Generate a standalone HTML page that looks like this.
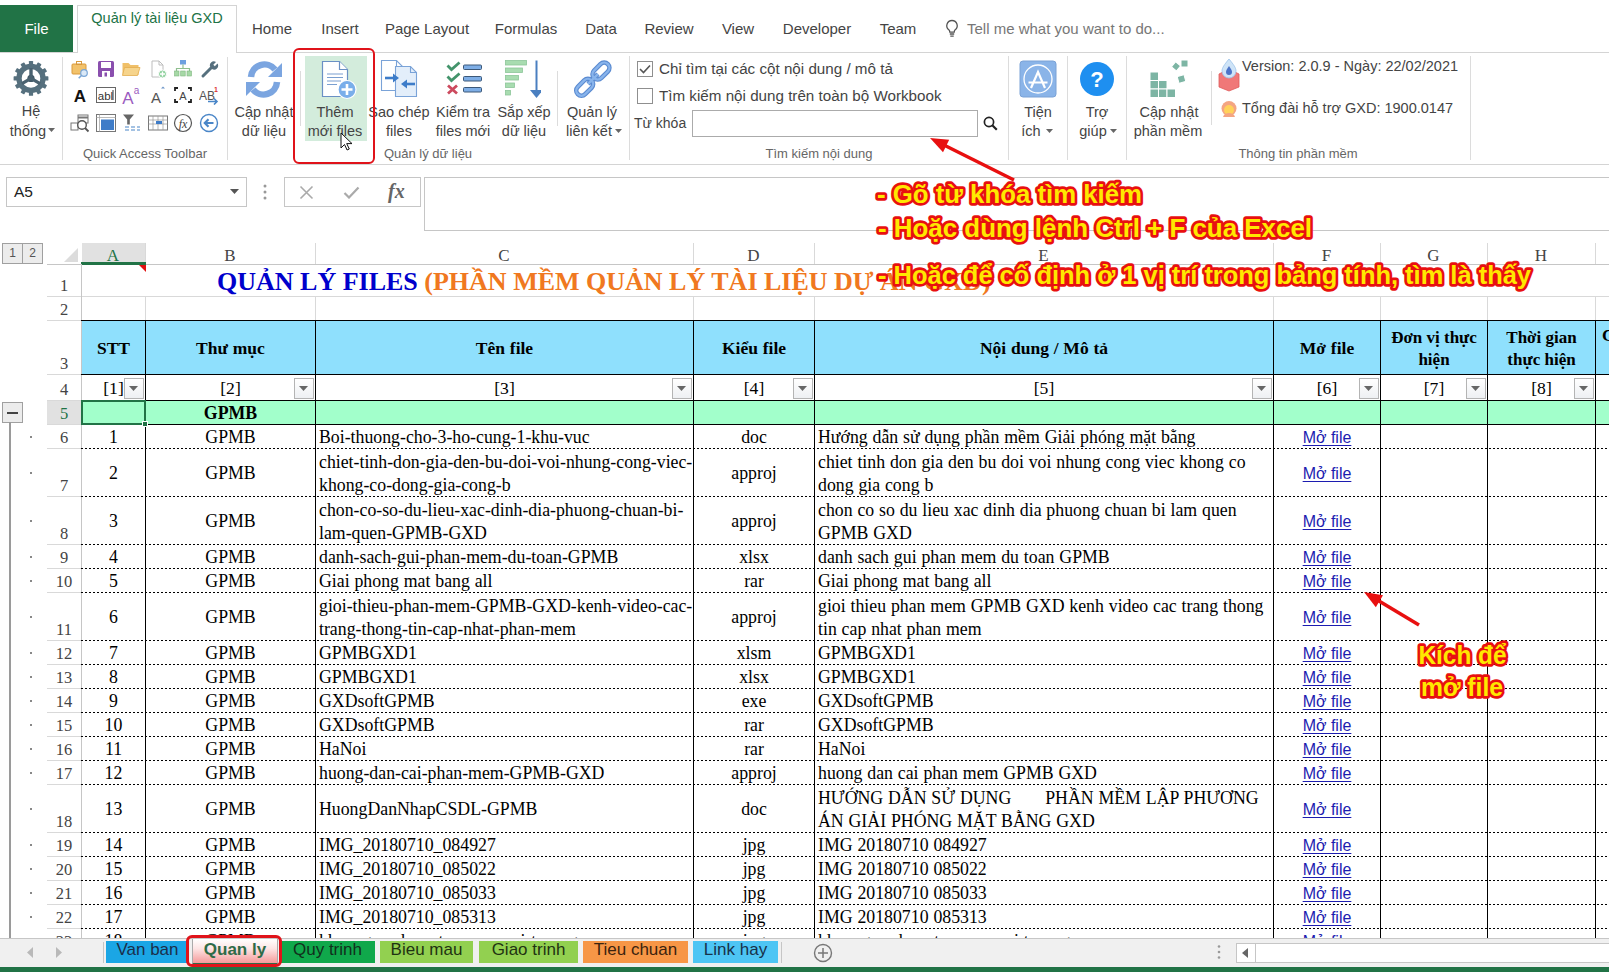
<!DOCTYPE html><html><head><meta charset="utf-8"><style>
*{margin:0;padding:0;box-sizing:border-box}
html,body{width:1609px;height:972px;overflow:hidden;background:#fff;position:relative;font-family:"Liberation Sans",sans-serif}
div,svg{position:absolute}
.t{white-space:pre;line-height:1}
.s{font-family:"Liberation Serif",serif}
.rb{color:#444;font-size:14.5px;text-align:center}
.gl{color:#666;font-size:13px;text-align:center}
.sep{background:#dcdcdc;width:1px}
</style></head><body>
<div style="left:0px;top:5px;width:73px;height:47px;background:#217346"></div>
<div class="t" style="left:0px;top:21px;width:73px;color:#fff;font-size:15px;text-align:center;">File</div>
<div style="left:77px;top:5px;width:160px;height:48px;border:1px solid #d4d4d4;border-bottom:none;background:#fff"></div>
<div class="t" style="left:77px;top:11px;width:160px;color:#217346;font-size:14.5px;text-align:center;">Quản lý tài liệu GXD</div>
<div style="left:0px;top:52px;width:78px;height:1px;background:#d4d4d4"></div>
<div style="left:236px;top:52px;width:1373px;height:1px;background:#d4d4d4"></div>
<div class="t" style="left:212px;top:21px;width:120px;color:#444;font-size:15px;text-align:center;">Home</div>
<div class="t" style="left:280px;top:21px;width:120px;color:#444;font-size:15px;text-align:center;">Insert</div>
<div class="t" style="left:367px;top:21px;width:120px;color:#444;font-size:15px;text-align:center;">Page Layout</div>
<div class="t" style="left:466px;top:21px;width:120px;color:#444;font-size:15px;text-align:center;">Formulas</div>
<div class="t" style="left:541px;top:21px;width:120px;color:#444;font-size:15px;text-align:center;">Data</div>
<div class="t" style="left:609px;top:21px;width:120px;color:#444;font-size:15px;text-align:center;">Review</div>
<div class="t" style="left:678px;top:21px;width:120px;color:#444;font-size:15px;text-align:center;">View</div>
<div class="t" style="left:757px;top:21px;width:120px;color:#444;font-size:15px;text-align:center;">Developer</div>
<div class="t" style="left:838px;top:21px;width:120px;color:#444;font-size:15px;text-align:center;">Team</div>
<svg style="left:945px;top:19px;" width="14" height="19" viewBox="0 0 14 19"><path d="M7 1.5a5.2 5.2 0 0 0-3.2 9.3c.8.7 1 1.5 1 2.4h4.4c0-.9.2-1.7 1-2.4A5.2 5.2 0 0 0 7 1.5z" fill="none" stroke="#555" stroke-width="1.3"/><path d="M4.8 15h4.4M5.3 17.2h3.4" stroke="#555" stroke-width="1.3"/></svg>
<div class="t" style="left:967px;top:21px;color:#777;font-size:15px;">Tell me what you want to do...</div>
<div style="left:0px;top:164px;width:1609px;height:1px;background:#d4d4d4"></div>
<svg style="left:12px;top:59px;" width="38" height="38" viewBox="0 0 38 38"><g transform="translate(19,19.4)">
<circle r="12" fill="none" stroke="#56707e" stroke-width="5.4"/>
<g fill="#56707e"><rect x="-2.1" y="-17.4" width="4.2" height="5" rx=".6" transform="rotate(0)"/><rect x="-2.1" y="-17.4" width="4.2" height="5" rx=".6" transform="rotate(30)"/><rect x="-2.1" y="-17.4" width="4.2" height="5" rx=".6" transform="rotate(60)"/><rect x="-2.1" y="-17.4" width="4.2" height="5" rx=".6" transform="rotate(90)"/><rect x="-2.1" y="-17.4" width="4.2" height="5" rx=".6" transform="rotate(120)"/><rect x="-2.1" y="-17.4" width="4.2" height="5" rx=".6" transform="rotate(150)"/><rect x="-2.1" y="-17.4" width="4.2" height="5" rx=".6" transform="rotate(180)"/><rect x="-2.1" y="-17.4" width="4.2" height="5" rx=".6" transform="rotate(210)"/><rect x="-2.1" y="-17.4" width="4.2" height="5" rx=".6" transform="rotate(240)"/><rect x="-2.1" y="-17.4" width="4.2" height="5" rx=".6" transform="rotate(270)"/><rect x="-2.1" y="-17.4" width="4.2" height="5" rx=".6" transform="rotate(300)"/><rect x="-2.1" y="-17.4" width="4.2" height="5" rx=".6" transform="rotate(330)"/></g>
<circle r="3.6" fill="#415866"/>
<path d="M0 0L0 -10.5M0 0L9.1 5.25M0 0L-9.1 5.25" stroke="#4a6270" stroke-width="3.4"/>
</g></svg>
<div class="t rb" style="left:0px;top:104px;width:62px;">Hệ</div>
<div class="t rb" style="left:0px;top:124px;width:56px;">thống</div>
<svg style="left:48px;top:128px;" width="8" height="5" viewBox="0 0 8 5"><path d="M0 0h7l-3.5 4z" fill="#666"/></svg>
<div style="background:#dcdcdc;left:62px;top:57px;width:1px;height:103px;"></div>
<div style="background:#dcdcdc;left:227px;top:57px;width:1px;height:103px;"></div>
<div class="t gl" style="left:62px;top:147px;width:166px;">Quick Access Toolbar</div>
<svg style="left:70px;top:59px;" width="20" height="20" viewBox="0 0 20 20"><rect x="2" y="5" width="14" height="10" rx="1" fill="#f2c26b" stroke="#d99a3c"/><rect x="6.5" y="2.5" width="5" height="3" fill="none" stroke="#d99a3c"/><circle cx="14" cy="14" r="3.3" fill="#dbe9f7" stroke="#7aa6d6" stroke-width="1.2"/><path d="M11.7 16.3l-3 3" stroke="#7aa6d6" stroke-width="1.6"/></svg>
<svg style="left:96px;top:59px;" width="20" height="20" viewBox="0 0 20 20"><rect x="2" y="2" width="16" height="16" rx="1.5" fill="#8a4fae"/><rect x="5" y="3" width="10" height="6" fill="#fff"/><rect x="6" y="12" width="8" height="6" fill="#fff"/><rect x="8.5" y="13.5" width="2.5" height="4" fill="#8a4fae"/></svg>
<svg style="left:121px;top:59px;" width="20" height="20" viewBox="0 0 20 20"><path d="M1.5 4h6l2 2h8v10h-16z" fill="#f0c069"/><path d="M3.5 8.5h15.5l-2.5 8h-15z" fill="#f6d48c" stroke="#e3ad4f" stroke-width=".8"/></svg>
<svg style="left:148px;top:59px;" width="20" height="20" viewBox="0 0 20 20"><path d="M4 2h7l4 4v12H4z" fill="#fff" stroke="#bdbdbd"/><path d="M11 2v4h4" fill="none" stroke="#bdbdbd"/><circle cx="14.5" cy="15" r="4" fill="#8fd19e" stroke="#fff"/><path d="M14.5 12.5v5M12 15h5" stroke="#fff" stroke-width="1.4"/></svg>
<svg style="left:173px;top:59px;" width="20" height="20" viewBox="0 0 20 20"><rect x="7" y="1" width="6" height="4.5" fill="#6ea0e0"/><path d="M10 5.5v4M3.5 12V9.5h13V12" fill="none" stroke="#8fbf8f" stroke-width="1.2"/><rect x="1.5" y="12" width="4.5" height="5" fill="#a6d8a6" stroke="#7fb87f" stroke-width=".6"/><rect x="7.7" y="12" width="4.5" height="5" fill="#a6d8a6" stroke="#7fb87f" stroke-width=".6"/><rect x="14" y="12" width="4.5" height="5" fill="#a6d8a6" stroke="#7fb87f" stroke-width=".6"/></svg>
<svg style="left:199px;top:59px;" width="20" height="20" viewBox="0 0 20 20"><path d="M4 17l8-8" stroke="#56707e" stroke-width="3" stroke-linecap="round"/><path d="M11.5 8.5a4 4 0 0 1 5.5-5.5l-2.7 2.7 1.5 1.5 2.7-2.7a4 4 0 0 1-5.5 5.5z" fill="#56707e"/></svg>
<svg style="left:70px;top:85px;" width="20" height="20" viewBox="0 0 20 20"><text x="10" y="16.5" text-anchor="middle" font-family="Liberation Sans" font-weight="bold" font-size="17" fill="#111">A</text></svg>
<svg style="left:96px;top:85px;" width="20" height="20" viewBox="0 0 20 20"><rect x="0.5" y="2.5" width="19" height="15" fill="#fff" stroke="#666"/><text x="9.5" y="14.5" text-anchor="middle" font-family="Liberation Sans" font-size="11.5" fill="#333">abl</text><path d="M17 5v10" stroke="#333"/></svg>
<svg style="left:121px;top:85px;" width="20" height="20" viewBox="0 0 20 20"><text x="7" y="18.5" text-anchor="middle" font-family="Liberation Sans" font-size="17" fill="#9a5bc0">A</text><text x="15.5" y="9" text-anchor="middle" font-family="Liberation Sans" font-size="10" fill="#9a5bc0">a</text></svg>
<svg style="left:148px;top:85px;" width="20" height="20" viewBox="0 0 20 20"><text x="8" y="18" text-anchor="middle" font-family="Liberation Sans" font-size="15" fill="#555">A</text><path d="M13 3.5l2 -2l2 2z" fill="#6c94c8"/></svg>
<svg style="left:173px;top:85px;" width="20" height="20" viewBox="0 0 20 20"><path d="M2 6V3h3M15 3h3v3M18 14v3h-3M5 17H2v-3" fill="none" stroke="#222" stroke-width="1.8"/><text x="10" y="14.5" text-anchor="middle" font-family="Liberation Sans" font-size="11" fill="#444">A</text></svg>
<svg style="left:199px;top:85px;" width="20" height="20" viewBox="0 0 20 20"><text x="8" y="15" text-anchor="middle" font-family="Liberation Sans" font-size="12" fill="#555">AB</text><text x="17" y="7" text-anchor="middle" font-family="Liberation Sans" font-weight="bold" font-size="7" fill="#d33">1</text><path d="M9 16.5h9M15 13.5l3 3-3 3" fill="none" stroke="#4a86c8" stroke-width="1.6"/></svg>
<svg style="left:70px;top:113px;" width="20" height="20" viewBox="0 0 20 20"><rect x="8" y="2" width="10" height="8" fill="none" stroke="#777"/><path d="M8 4.5h10" stroke="#777" stroke-width="2"/><rect x="1" y="10" width="7" height="7" fill="none" stroke="#777"/><circle cx="12" cy="12" r="4.3" fill="#fff" stroke="#555" stroke-width="1.4"/><path d="M15 15l3.5 3.5" stroke="#555" stroke-width="1.8"/></svg>
<svg style="left:96px;top:113px;" width="20" height="20" viewBox="0 0 20 20"><rect x="0.5" y="1.5" width="19" height="17" fill="#fff" stroke="#777"/><path d="M0.5 4.5h19M3.5 1.5v17" stroke="#aaa" stroke-width=".8"/><rect x="5" y="6.5" width="13" height="10.5" fill="#3f7cc8"/></svg>
<svg style="left:121px;top:113px;" width="20" height="20" viewBox="0 0 20 20"><path d="M2 1.5h11l-4.2 5v5h-2.6v-5z" fill="#666"/><path d="M4 14h4M10 14h4M16 14h3M4 17h4M10 17h4M16 17h3" stroke="#4a86c8" stroke-width="1.2"/></svg>
<svg style="left:148px;top:113px;" width="20" height="20" viewBox="0 0 20 20"><rect x="0.5" y="3" width="19" height="14" fill="#fff" stroke="#777"/><path d="M0.5 7h19M0.5 11h19M5 3v14M10 3v14M15 3v14" stroke="#999" stroke-width=".7"/><rect x="8" y="8" width="6" height="3" fill="#3f7cc8"/></svg>
<svg style="left:173px;top:113px;" width="20" height="20" viewBox="0 0 20 20"><circle cx="10" cy="10" r="8.5" fill="#fff" stroke="#555" stroke-width="1.2"/><text x="10" y="14.5" text-anchor="middle" font-family="Liberation Serif" font-style="italic" font-size="12" fill="#444">fx</text></svg>
<svg style="left:199px;top:113px;" width="20" height="20" viewBox="0 0 20 20"><circle cx="10" cy="10" r="8.5" fill="#fff" stroke="#4a86c8" stroke-width="1.4"/><path d="M14.5 10h-8.5M9.5 6.3l-3.7 3.7 3.7 3.7" fill="none" stroke="#4a86c8" stroke-width="2.2"/></svg>
<svg style="left:244px;top:60px;" width="40" height="39" viewBox="0 0 40 39"><path d="M7 17A13.5 13.5 0 0 1 31 9.5" fill="none" stroke="#7ba5e0" stroke-width="6.5"/><path d="M38 3v14h-14z" fill="#7ba5e0"/><path d="M33 22A13.5 13.5 0 0 1 9 29.5" fill="none" stroke="#7ba5e0" stroke-width="6.5"/><path d="M2 36V22h14z" fill="#7ba5e0"/></svg>
<div class="t rb" style="left:230px;top:105px;width:68px;">Cập nhật</div>
<div class="t rb" style="left:230px;top:124px;width:68px;">dữ liệu</div>
<div style="left:300px;top:71px;width:1px;height:55px;background:#dcdcdc"></div>
<div style="left:305px;top:56px;width:62px;height:85px;background:#d3ecdc"></div>
<svg style="left:320px;top:60px;" width="40" height="40" viewBox="0 0 40 40"><path d="M2.5 1.5h17l8 8v27h-25z" fill="#fff" stroke="#6a90c4" stroke-width="1.2"/><path d="M19.5 1.5v8h8" fill="#fff" stroke="#6a90c4" stroke-width="1.2"/><path d="M7 14h16M7 17.5h16M7 21h14M7 24.5h10" stroke="#7a9fd0" stroke-width="1"/><circle cx="27" cy="29.5" r="9" fill="#7aaeea" stroke="#fff" stroke-width="1.2"/><path d="M27 24v11M21.5 29.5h11" stroke="#fff" stroke-width="2.6"/></svg>
<div class="t rb" style="left:301px;top:105px;width:68px;">Thêm</div>
<div class="t rb" style="left:301px;top:124px;width:68px;">mới files</div>
<svg style="left:378px;top:58px;" width="44" height="42" viewBox="0 0 44 42"><path d="M3.5 2.5h15l6 6v24h-21z" fill="#fff" stroke="#7aa3d8" stroke-width="1.1"/><path d="M18.5 2.5v6h6" fill="none" stroke="#7aa3d8" stroke-width="1.1"/><path d="M17.5 8.5h15l6 6v24h-21z" fill="#e3eefa" stroke="#7aa3d8" stroke-width="1.1"/><path d="M32.5 8.5v6h6" fill="none" stroke="#7aa3d8" stroke-width="1.1"/><path d="M7 20h10" stroke="#3d7cc9" stroke-width="2.6"/><path d="M15 15.5l6 4.5-6 4.5z" fill="#3d7cc9"/><path d="M37 26h-10" stroke="#3d7cc9" stroke-width="2.6"/><path d="M29 21.5l-6 4.5 6 4.5z" fill="#3d7cc9"/></svg>
<div class="t rb" style="left:364px;top:105px;width:70px;">Sao chép</div>
<div class="t rb" style="left:364px;top:124px;width:70px;">files</div>
<svg style="left:446px;top:61px;" width="38" height="34" viewBox="0 0 38 34"><path d="M1.5 4.5l4 4 8-7" fill="none" stroke="#43946b" stroke-width="2.8"/><path d="M1.5 15.5l4 4 8-7" fill="none" stroke="#43946b" stroke-width="2.8"/><path d="M2 24.5l9 8M11 24.5l-9 8" stroke="#cc4a5e" stroke-width="2.8"/><rect x="17.5" y="4" width="18" height="4.5" rx="1" fill="#7eaee6" stroke="#3c5878" stroke-width="1"/><rect x="17.5" y="15.5" width="18" height="4.5" rx="1" fill="#7eaee6" stroke="#3c5878" stroke-width="1"/><rect x="17.5" y="26.5" width="18" height="4.5" rx="1" fill="#7eaee6" stroke="#3c5878" stroke-width="1"/></svg>
<div class="t rb" style="left:429px;top:105px;width:68px;">Kiểm tra</div>
<div class="t rb" style="left:429px;top:124px;width:68px;">files mới</div>
<svg style="left:503px;top:59px;" width="38" height="41" viewBox="0 0 38 41"><rect x="2.5" y="1.5" width="21" height="4.5" fill="#a8dcb0" stroke="#8cc59a" stroke-width=".8"/><rect x="2.5" y="9" width="17" height="4.5" fill="#a8dcb0" stroke="#8cc59a" stroke-width=".8"/><rect x="2.5" y="16.5" width="13" height="4.5" fill="#a8dcb0" stroke="#8cc59a" stroke-width=".8"/><rect x="2.5" y="24" width="9" height="4.5" fill="#a8dcb0" stroke="#8cc59a" stroke-width=".8"/><rect x="2.5" y="31.5" width="5" height="4.5" fill="#a8dcb0" stroke="#8cc59a" stroke-width=".8"/><path d="M33.5 1.5v30" stroke="#4a7fc0" stroke-width="2"/><path d="M27 31h13l-6.5 8z" fill="#4a7fc0"/></svg>
<div class="t rb" style="left:489px;top:105px;width:70px;">Sắp xếp</div>
<div class="t rb" style="left:489px;top:124px;width:70px;">dữ liệu</div>
<div style="left:557px;top:71px;width:1px;height:55px;background:#dcdcdc"></div>
<svg style="left:571px;top:57px;overflow:visible" width="44" height="44" viewBox="0 0 44 44"><g transform="rotate(45 22 22)"><g fill="none" stroke="#5a8ad0" stroke-width="4.6"><rect x="16.8" y="1" width="10.4" height="19.5" rx="5.2"/><rect x="16.8" y="24" width="10.4" height="19.5" rx="5.2"/><path d="M22 15v14"/></g><g fill="none" stroke="#88b4ec" stroke-width="2.4"><rect x="16.8" y="1" width="10.4" height="19.5" rx="5.2"/><rect x="16.8" y="24" width="10.4" height="19.5" rx="5.2"/><path d="M22 15v14"/></g></g></svg>
<div class="t rb" style="left:556px;top:105px;width:72px;">Quản lý</div>
<div class="t rb" style="left:556px;top:124px;width:66px;">liên kết</div>
<svg style="left:615px;top:129px;" width="8" height="5" viewBox="0 0 8 5"><path d="M0 0h7l-3.5 4z" fill="#666"/></svg>
<div style="left:629px;top:56px;width:1px;height:104px;background:#dcdcdc"></div>
<div class="t gl" style="left:378px;top:147px;width:100px;">Quản lý dữ liệu</div>
<div style="left:637px;top:61px;width:16px;height:16px;border:1px solid #8f8f8f;background:#fff"></div>
<svg style="left:639px;top:64px;" width="12" height="10" viewBox="0 0 12 10"><path d="M1 5l3.5 3.5L11 1.5" fill="none" stroke="#555" stroke-width="1.6"/></svg>
<div style="left:637px;top:88px;width:16px;height:16px;border:1px solid #8f8f8f;background:#fff"></div>
<div class="t" style="left:659px;top:61px;color:#444;font-size:15.2px">Chỉ tìm tại các cột nội dung / mô tả</div>
<div class="t" style="left:659px;top:88px;color:#444;font-size:15.2px">Tìm kiếm nội dung trên toàn bộ Workbook</div>
<div class="t" style="left:634px;top:116px;color:#444;font-size:14px">Từ khóa</div>
<div style="left:692px;top:110px;width:286px;height:27px;border:1px solid #ababab;background:#fff"></div>
<svg style="left:983px;top:116px;" width="15" height="15" viewBox="0 0 15 15"><circle cx="6" cy="6" r="4.6" fill="none" stroke="#222" stroke-width="1.7"/><path d="M9.3 9.3l4.5 4.5" stroke="#222" stroke-width="2.2"/></svg>
<div class="t gl" style="left:729px;top:147px;width:180px;">Tìm kiếm nội dung</div>
<div style="left:1008px;top:56px;width:1px;height:104px;background:#dcdcdc"></div>
<svg style="left:1019px;top:60px;" width="38" height="38" viewBox="0 0 38 38"><rect x="1" y="1" width="36" height="36" rx="3" fill="#8ab4e8" stroke="#7aa2d6"/><circle cx="19" cy="19" r="14" fill="none" stroke="#fff" stroke-width="1.3"/><path d="M12 28l7-16 7 16M9.5 22.5h19" fill="none" stroke="#fff" stroke-width="2.2"/></svg>
<div class="t rb" style="left:1009px;top:105px;width:58px;">Tiện</div>
<div class="t rb" style="left:1005px;top:124px;width:52px;">ích</div>
<svg style="left:1046px;top:129px;" width="8" height="5" viewBox="0 0 8 5"><path d="M0 0h7l-3.5 4z" fill="#666"/></svg>
<div style="left:1067px;top:56px;width:1px;height:104px;background:#dcdcdc"></div>
<svg style="left:1079px;top:61px;" width="36" height="36" viewBox="0 0 36 36"><circle cx="18" cy="18" r="17" fill="#1e8ff0"/><text x="18" y="26" text-anchor="middle" font-family="Liberation Sans" font-weight="bold" font-size="22" fill="#fff">?</text></svg>
<div class="t rb" style="left:1068px;top:105px;width:58px;">Trợ</div>
<div class="t rb" style="left:1064px;top:124px;width:58px;">giúp</div>
<svg style="left:1110px;top:129px;" width="8" height="5" viewBox="0 0 8 5"><path d="M0 0h7l-3.5 4z" fill="#666"/></svg>
<div style="left:1126px;top:56px;width:1px;height:104px;background:#dcdcdc"></div>
<svg style="left:1149px;top:59px;" width="40" height="40" viewBox="0 0 40 40"><g fill="#7db5a4" stroke="#fff" stroke-width="1"><rect x="1" y="13" width="8.5" height="8.5"/><rect x="1" y="21.5" width="8.5" height="8.5"/><rect x="1" y="30" width="8.5" height="8.5"/><rect x="9.5" y="21.5" width="8.5" height="8.5"/><rect x="9.5" y="30" width="8.5" height="8.5"/><rect x="18" y="30" width="8.5" height="8.5"/><rect x="24" y="4" width="6.5" height="6.5" transform="rotate(40 27 7)"/><rect x="32" y="1" width="7" height="7"/><rect x="29" y="16.5" width="7" height="7" transform="rotate(-15 32.5 20)"/></g></svg>
<div class="t rb" style="left:1133px;top:105px;width:72px;">Cập nhật</div>
<div class="t rb" style="left:1128px;top:124px;width:80px;">phần mềm</div>
<div style="left:1211px;top:71px;width:1px;height:54px;background:#dcdcdc"></div>
<svg style="left:1217px;top:58px;" width="24" height="34" viewBox="0 0 24 34"><path d="M2 16l10-5 10 5v13l-10 4-10-4z" fill="#f07878" stroke="#e05a5a" stroke-width=".8"/><path d="M12 1c-5 6-7 9-7 12a7 7 0 0 0 14 0c0-3-2-6-7-12z" fill="#cfe4f7" stroke="#9cc3ea" stroke-width=".8"/><path d="M12 8c-2 3-3 4-3 6a3 3 0 0 0 6 0c0-2-1-3-3-6z" fill="#4c74c8"/></svg>
<div class="t" style="left:1242px;top:59px;color:#444;font-size:14.5px">Version: 2.0.9 - Ngày: 22/02/2021</div>
<svg style="left:1220px;top:100px;" width="18" height="17" viewBox="0 0 18 17"><circle cx="9" cy="8.5" r="7.5" fill="#f4a582"/><circle cx="9" cy="10" r="5" fill="#ffd25a"/><path d="M3 17c1-3 3-4 6-4s5 1 6 4z" fill="#f4a582"/></svg>
<div class="t" style="left:1242px;top:101px;color:#444;font-size:14.5px">Tổng đài hỗ trợ GXD: 1900.0147</div>
<div class="t gl" style="left:1238px;top:147px;width:120px;">Thông tin phần mềm</div>
<div style="left:1470px;top:56px;width:1px;height:104px;background:#dcdcdc"></div>
<div style="left:293px;top:48px;width:82px;height:116px;border:2.5px solid #e0131a;border-radius:6px"></div>
<svg style="left:340px;top:132px;" width="14" height="20" viewBox="0 0 14 20"><path d="M1 1v15l3.5-3.5 2.6 5.5 2.2-1-2.6-5.4H12z" fill="#fff" stroke="#111" stroke-width="1"/></svg>
<div style="left:6px;top:177px;width:241px;height:30px;border:1px solid #c6c6c6;background:#fff"></div>
<div class="t" style="left:14px;top:184px;color:#222;font-size:15.5px">A5</div>
<svg style="left:230px;top:189px;" width="10" height="6" viewBox="0 0 10 6"><path d="M0 0h9l-4.5 5z" fill="#555"/></svg>
<svg style="left:263px;top:184px;" width="4" height="16" viewBox="0 0 4 16"><circle cx="2" cy="2" r="1.5" fill="#999"/><circle cx="2" cy="8" r="1.5" fill="#999"/><circle cx="2" cy="14" r="1.5" fill="#999"/></svg>
<div style="left:284px;top:177px;width:137px;height:30px;border:1px solid #c6c6c6;background:#fff"></div>
<svg style="left:299px;top:185px;" width="15" height="15" viewBox="0 0 15 15"><path d="M1.5 1.5l12 12M13.5 1.5l-12 12" stroke="#aaa" stroke-width="1.6"/></svg>
<svg style="left:343px;top:186px;" width="17" height="13" viewBox="0 0 17 13"><path d="M1.5 7l4.5 4.5L15.5 1.5" fill="none" stroke="#aaa" stroke-width="2.2"/></svg>
<div class="t" style="left:388px;top:181px;font-family:Liberation Serif;font-style:italic;font-weight:bold;font-size:20px;color:#666">fx</div>
<div style="left:424px;top:177px;width:1190px;height:54px;border:1px solid #c6c6c6;background:#fff"></div>
<div style="left:2px;top:243px;width:21px;height:21px;border:1px solid #a0a0a0;background:#ececec"></div>
<div class="t" style="left:2px;top:247px;width:21px;color:#555;font-size:12px;text-align:center">1</div>
<div style="left:22px;top:243px;width:21px;height:21px;border:1px solid #a0a0a0;background:#ececec"></div>
<div class="t" style="left:22px;top:247px;width:21px;color:#555;font-size:12px;text-align:center">2</div>
<div style="left:47px;top:243px;width:1562px;height:21px;background:#fff"></div>
<div style="left:82px;top:243px;width:63px;height:21px;background:#e1e1e1"></div>
<div class="t s" style="left:81px;top:247px;width:64px;text-align:center;font-size:17px;color:#217346">A</div>
<div class="t s" style="left:145px;top:247px;width:170px;text-align:center;font-size:17px;color:#444">B</div>
<div style="left:145px;top:243px;width:1px;height:21px;background:#d9d9d9"></div>
<div class="t s" style="left:315px;top:247px;width:378px;text-align:center;font-size:17px;color:#444">C</div>
<div style="left:315px;top:243px;width:1px;height:21px;background:#d9d9d9"></div>
<div class="t s" style="left:693px;top:247px;width:121px;text-align:center;font-size:17px;color:#444">D</div>
<div style="left:693px;top:243px;width:1px;height:21px;background:#d9d9d9"></div>
<div class="t s" style="left:814px;top:247px;width:459px;text-align:center;font-size:17px;color:#444">E</div>
<div style="left:814px;top:243px;width:1px;height:21px;background:#d9d9d9"></div>
<div class="t s" style="left:1273px;top:247px;width:107px;text-align:center;font-size:17px;color:#444">F</div>
<div style="left:1273px;top:243px;width:1px;height:21px;background:#d9d9d9"></div>
<div class="t s" style="left:1380px;top:247px;width:107px;text-align:center;font-size:17px;color:#444">G</div>
<div style="left:1380px;top:243px;width:1px;height:21px;background:#d9d9d9"></div>
<div class="t s" style="left:1487px;top:247px;width:108px;text-align:center;font-size:17px;color:#444">H</div>
<div style="left:1487px;top:243px;width:1px;height:21px;background:#d9d9d9"></div>
<div class="t s" style="left:1595px;top:247px;width:105px;text-align:center;font-size:17px;color:#444">I</div>
<div style="left:1595px;top:243px;width:1px;height:21px;background:#d9d9d9"></div>
<div style="left:47px;top:264px;width:1562px;height:1px;background:#c6c6c6"></div>
<svg style="left:63px;top:247px;" width="16" height="15" viewBox="0 0 16 15"><path d="M15 1v14H1z" fill="#dcdcdc"/></svg>
<div style="left:81px;top:262px;width:65px;height:2.5px;background:#217346"></div>
<svg style="left:139px;top:265px;" width="7" height="7" viewBox="0 0 7 7"><path d="M0 0h7v7z" fill="#e01010"/></svg>
<div style="left:81px;top:264px;width:1px;height:674px;background:#c6c6c6"></div>
<div style="left:82px;top:296px;width:1527px;height:1px;background:#d9d9d9"></div>
<div style="left:145px;top:297px;width:1px;height:23px;background:#d9d9d9"></div>
<div style="left:315px;top:297px;width:1px;height:23px;background:#d9d9d9"></div>
<div style="left:693px;top:297px;width:1px;height:23px;background:#d9d9d9"></div>
<div style="left:814px;top:297px;width:1px;height:23px;background:#d9d9d9"></div>
<div style="left:1273px;top:297px;width:1px;height:23px;background:#d9d9d9"></div>
<div style="left:1380px;top:297px;width:1px;height:23px;background:#d9d9d9"></div>
<div style="left:1487px;top:297px;width:1px;height:23px;background:#d9d9d9"></div>
<div style="left:1595px;top:297px;width:1px;height:23px;background:#d9d9d9"></div>
<div style="left:47px;top:296px;width:34px;height:1px;background:#d9d9d9"></div>
<div class="t s" style="left:47px;top:278px;width:34px;text-align:center;font-size:16.5px;color:#444;">1</div>
<div style="left:47px;top:320px;width:34px;height:1px;background:#d9d9d9"></div>
<div class="t s" style="left:47px;top:302px;width:34px;text-align:center;font-size:16.5px;color:#444;">2</div>
<div style="left:47px;top:374px;width:34px;height:1px;background:#d9d9d9"></div>
<div class="t s" style="left:47px;top:356px;width:34px;text-align:center;font-size:16.5px;color:#444;">3</div>
<div style="left:47px;top:400px;width:34px;height:1px;background:#d9d9d9"></div>
<div class="t s" style="left:47px;top:382px;width:34px;text-align:center;font-size:16.5px;color:#444;">4</div>
<div style="left:47px;top:401px;width:34px;height:24px;background:#e1e1e1"></div>
<div style="left:47px;top:424px;width:34px;height:1px;background:#d9d9d9"></div>
<div class="t s" style="left:47px;top:406px;width:34px;text-align:center;font-size:16.5px;color:#217346;">5</div>
<div style="left:47px;top:448px;width:34px;height:1px;background:#d9d9d9"></div>
<div class="t s" style="left:47px;top:430px;width:34px;text-align:center;font-size:16.5px;color:#444;">6</div>
<div style="left:47px;top:496px;width:34px;height:1px;background:#d9d9d9"></div>
<div class="t s" style="left:47px;top:478px;width:34px;text-align:center;font-size:16.5px;color:#444;">7</div>
<div style="left:47px;top:544px;width:34px;height:1px;background:#d9d9d9"></div>
<div class="t s" style="left:47px;top:526px;width:34px;text-align:center;font-size:16.5px;color:#444;">8</div>
<div style="left:47px;top:568px;width:34px;height:1px;background:#d9d9d9"></div>
<div class="t s" style="left:47px;top:550px;width:34px;text-align:center;font-size:16.5px;color:#444;">9</div>
<div style="left:47px;top:592px;width:34px;height:1px;background:#d9d9d9"></div>
<div class="t s" style="left:47px;top:574px;width:34px;text-align:center;font-size:16.5px;color:#444;">10</div>
<div style="left:47px;top:640px;width:34px;height:1px;background:#d9d9d9"></div>
<div class="t s" style="left:47px;top:622px;width:34px;text-align:center;font-size:16.5px;color:#444;">11</div>
<div style="left:47px;top:664px;width:34px;height:1px;background:#d9d9d9"></div>
<div class="t s" style="left:47px;top:646px;width:34px;text-align:center;font-size:16.5px;color:#444;">12</div>
<div style="left:47px;top:688px;width:34px;height:1px;background:#d9d9d9"></div>
<div class="t s" style="left:47px;top:670px;width:34px;text-align:center;font-size:16.5px;color:#444;">13</div>
<div style="left:47px;top:712px;width:34px;height:1px;background:#d9d9d9"></div>
<div class="t s" style="left:47px;top:694px;width:34px;text-align:center;font-size:16.5px;color:#444;">14</div>
<div style="left:47px;top:736px;width:34px;height:1px;background:#d9d9d9"></div>
<div class="t s" style="left:47px;top:718px;width:34px;text-align:center;font-size:16.5px;color:#444;">15</div>
<div style="left:47px;top:760px;width:34px;height:1px;background:#d9d9d9"></div>
<div class="t s" style="left:47px;top:742px;width:34px;text-align:center;font-size:16.5px;color:#444;">16</div>
<div style="left:47px;top:784px;width:34px;height:1px;background:#d9d9d9"></div>
<div class="t s" style="left:47px;top:766px;width:34px;text-align:center;font-size:16.5px;color:#444;">17</div>
<div style="left:47px;top:832px;width:34px;height:1px;background:#d9d9d9"></div>
<div class="t s" style="left:47px;top:814px;width:34px;text-align:center;font-size:16.5px;color:#444;">18</div>
<div style="left:47px;top:856px;width:34px;height:1px;background:#d9d9d9"></div>
<div class="t s" style="left:47px;top:838px;width:34px;text-align:center;font-size:16.5px;color:#444;">19</div>
<div style="left:47px;top:880px;width:34px;height:1px;background:#d9d9d9"></div>
<div class="t s" style="left:47px;top:862px;width:34px;text-align:center;font-size:16.5px;color:#444;">20</div>
<div style="left:47px;top:904px;width:34px;height:1px;background:#d9d9d9"></div>
<div class="t s" style="left:47px;top:886px;width:34px;text-align:center;font-size:16.5px;color:#444;">21</div>
<div style="left:47px;top:928px;width:34px;height:1px;background:#d9d9d9"></div>
<div class="t s" style="left:47px;top:910px;width:34px;text-align:center;font-size:16.5px;color:#444;">22</div>
<div class="t s" style="left:47px;top:934px;width:34px;text-align:center;font-size:16.5px;color:#444;">23</div>
<div style="left:82px;top:321px;width:1527px;height:53px;background:#8fe0fd"></div>
<div style="left:82px;top:401px;width:1527px;height:23px;background:#a2ffcb"></div>
<div style="left:81px;top:320px;width:1528px;height:1px;background:#000"></div>
<div style="left:81px;top:374px;width:1528px;height:1px;background:#000"></div>
<div style="left:81px;top:400px;width:1528px;height:1px;background:#000"></div>
<div style="left:81px;top:424px;width:1528px;height:1px;background:#000"></div>
<div style="left:145px;top:320px;width:1px;height:618px;background:#000"></div>
<div style="left:315px;top:320px;width:1px;height:618px;background:#000"></div>
<div style="left:693px;top:320px;width:1px;height:618px;background:#000"></div>
<div style="left:814px;top:320px;width:1px;height:618px;background:#000"></div>
<div style="left:1273px;top:320px;width:1px;height:618px;background:#000"></div>
<div style="left:1380px;top:320px;width:1px;height:618px;background:#000"></div>
<div style="left:1487px;top:320px;width:1px;height:618px;background:#000"></div>
<div style="left:1595px;top:320px;width:1px;height:618px;background:#000"></div>
<div style="left:81px;top:448px;width:1528px;height:1px;background:repeating-linear-gradient(to right,#000 0 2px,transparent 2px 4px)"></div>
<div style="left:81px;top:496px;width:1528px;height:1px;background:repeating-linear-gradient(to right,#000 0 2px,transparent 2px 4px)"></div>
<div style="left:81px;top:544px;width:1528px;height:1px;background:repeating-linear-gradient(to right,#000 0 2px,transparent 2px 4px)"></div>
<div style="left:81px;top:568px;width:1528px;height:1px;background:repeating-linear-gradient(to right,#000 0 2px,transparent 2px 4px)"></div>
<div style="left:81px;top:592px;width:1528px;height:1px;background:repeating-linear-gradient(to right,#000 0 2px,transparent 2px 4px)"></div>
<div style="left:81px;top:640px;width:1528px;height:1px;background:repeating-linear-gradient(to right,#000 0 2px,transparent 2px 4px)"></div>
<div style="left:81px;top:664px;width:1528px;height:1px;background:repeating-linear-gradient(to right,#000 0 2px,transparent 2px 4px)"></div>
<div style="left:81px;top:688px;width:1528px;height:1px;background:repeating-linear-gradient(to right,#000 0 2px,transparent 2px 4px)"></div>
<div style="left:81px;top:712px;width:1528px;height:1px;background:repeating-linear-gradient(to right,#000 0 2px,transparent 2px 4px)"></div>
<div style="left:81px;top:736px;width:1528px;height:1px;background:repeating-linear-gradient(to right,#000 0 2px,transparent 2px 4px)"></div>
<div style="left:81px;top:760px;width:1528px;height:1px;background:repeating-linear-gradient(to right,#000 0 2px,transparent 2px 4px)"></div>
<div style="left:81px;top:784px;width:1528px;height:1px;background:repeating-linear-gradient(to right,#000 0 2px,transparent 2px 4px)"></div>
<div style="left:81px;top:832px;width:1528px;height:1px;background:repeating-linear-gradient(to right,#000 0 2px,transparent 2px 4px)"></div>
<div style="left:81px;top:856px;width:1528px;height:1px;background:repeating-linear-gradient(to right,#000 0 2px,transparent 2px 4px)"></div>
<div style="left:81px;top:880px;width:1528px;height:1px;background:repeating-linear-gradient(to right,#000 0 2px,transparent 2px 4px)"></div>
<div style="left:81px;top:904px;width:1528px;height:1px;background:repeating-linear-gradient(to right,#000 0 2px,transparent 2px 4px)"></div>
<div style="left:81px;top:928px;width:1528px;height:1px;background:repeating-linear-gradient(to right,#000 0 2px,transparent 2px 4px)"></div>
<div class="t s" style="left:217px;top:269px;font-size:26px;font-weight:bold;"><span style="color:#0000cc">QUẢN LÝ FILES </span><span style="color:#f07820">(PHẦN MỀM QUẢN LÝ TÀI LIỆU DỰ ÁN GXD)</span></div>
<div class="t s" style="left:82px;width:63px;top:340.3px;font-size:17.5px;font-weight:bold;text-align:center;color:#000;word-spacing:0.4px;">STT</div>
<div class="t s" style="left:146px;width:169px;top:340.3px;font-size:17.5px;font-weight:bold;text-align:center;color:#000;word-spacing:0.4px;">Thư mục</div>
<div class="t s" style="left:316px;width:377px;top:340.3px;font-size:17.5px;font-weight:bold;text-align:center;color:#000;word-spacing:0.4px;">Tên file</div>
<div class="t s" style="left:694px;width:120px;top:340.3px;font-size:17.5px;font-weight:bold;text-align:center;color:#000;word-spacing:0.4px;">Kiểu file</div>
<div class="t s" style="left:815px;width:458px;top:340.3px;font-size:17.5px;font-weight:bold;text-align:center;color:#000;word-spacing:0.4px;">Nội dung / Mô tả</div>
<div class="t s" style="left:1274px;width:106px;top:340.3px;font-size:17.5px;font-weight:bold;text-align:center;color:#000;word-spacing:0.4px;">Mở file</div>
<div class="t s" style="left:1381px;width:106px;top:328.8px;font-size:17px;font-weight:bold;text-align:center">Đơn vị thực</div>
<div class="t s" style="left:1381px;width:106px;top:350.8px;font-size:17px;font-weight:bold;text-align:center">hiện</div>
<div class="t s" style="left:1488px;width:107px;top:328.8px;font-size:17px;font-weight:bold;text-align:center">Thời gian</div>
<div class="t s" style="left:1488px;width:107px;top:350.8px;font-size:17px;font-weight:bold;text-align:center">thực hiện</div>
<div class="t s" style="left:1602px;top:327px;font-size:17px;font-weight:bold">Cập nhật</div>
<div class="t s" style="left:82px;width:63px;top:380.3px;font-size:17.6px;text-align:center">[1]</div>
<div style="left:124px;top:378px;width:20px;height:21px;border:1px solid #b4b4b4;background:linear-gradient(#fff,#eef0f3)"></div>
<svg style="left:129px;top:386px;" width="10" height="6" viewBox="0 0 10 6"><path d="M0 0h9l-4.5 5z" fill="#666"/></svg>
<div class="t s" style="left:146px;width:169px;top:380.3px;font-size:17.6px;text-align:center">[2]</div>
<div style="left:294px;top:378px;width:20px;height:21px;border:1px solid #b4b4b4;background:linear-gradient(#fff,#eef0f3)"></div>
<svg style="left:299px;top:386px;" width="10" height="6" viewBox="0 0 10 6"><path d="M0 0h9l-4.5 5z" fill="#666"/></svg>
<div class="t s" style="left:316px;width:377px;top:380.3px;font-size:17.6px;text-align:center">[3]</div>
<div style="left:672px;top:378px;width:20px;height:21px;border:1px solid #b4b4b4;background:linear-gradient(#fff,#eef0f3)"></div>
<svg style="left:677px;top:386px;" width="10" height="6" viewBox="0 0 10 6"><path d="M0 0h9l-4.5 5z" fill="#666"/></svg>
<div class="t s" style="left:694px;width:120px;top:380.3px;font-size:17.6px;text-align:center">[4]</div>
<div style="left:793px;top:378px;width:20px;height:21px;border:1px solid #b4b4b4;background:linear-gradient(#fff,#eef0f3)"></div>
<svg style="left:798px;top:386px;" width="10" height="6" viewBox="0 0 10 6"><path d="M0 0h9l-4.5 5z" fill="#666"/></svg>
<div class="t s" style="left:815px;width:458px;top:380.3px;font-size:17.6px;text-align:center">[5]</div>
<div style="left:1252px;top:378px;width:20px;height:21px;border:1px solid #b4b4b4;background:linear-gradient(#fff,#eef0f3)"></div>
<svg style="left:1257px;top:386px;" width="10" height="6" viewBox="0 0 10 6"><path d="M0 0h9l-4.5 5z" fill="#666"/></svg>
<div class="t s" style="left:1274px;width:106px;top:380.3px;font-size:17.6px;text-align:center">[6]</div>
<div style="left:1359px;top:378px;width:20px;height:21px;border:1px solid #b4b4b4;background:linear-gradient(#fff,#eef0f3)"></div>
<svg style="left:1364px;top:386px;" width="10" height="6" viewBox="0 0 10 6"><path d="M0 0h9l-4.5 5z" fill="#666"/></svg>
<div class="t s" style="left:1381px;width:106px;top:380.3px;font-size:17.6px;text-align:center">[7]</div>
<div style="left:1466px;top:378px;width:20px;height:21px;border:1px solid #b4b4b4;background:linear-gradient(#fff,#eef0f3)"></div>
<svg style="left:1471px;top:386px;" width="10" height="6" viewBox="0 0 10 6"><path d="M0 0h9l-4.5 5z" fill="#666"/></svg>
<div class="t s" style="left:1488px;width:107px;top:380.3px;font-size:17.6px;text-align:center">[8]</div>
<div style="left:1574px;top:378px;width:20px;height:21px;border:1px solid #b4b4b4;background:linear-gradient(#fff,#eef0f3)"></div>
<svg style="left:1579px;top:386px;" width="10" height="6" viewBox="0 0 10 6"><path d="M0 0h9l-4.5 5z" fill="#666"/></svg>
<div class="t s" style="left:146px;width:169px;top:405.1px;font-size:17.8px;font-weight:bold;text-align:center;color:#000;word-spacing:0.4px;">GPMB</div>
<div style="left:81px;top:400px;width:65px;height:25px;border:2px solid #217346"></div>
<div style="left:142px;top:421px;width:6px;height:6px;background:#217346;border:1px solid #fff"></div>
<div style="left:0;top:0;width:1609px;height:938px;overflow:hidden">
<div class="t s" style="left:82px;width:63px;top:429.1px;font-size:17.8px;font-weight:normal;text-align:center;color:#000;word-spacing:0.4px;">1</div>
<div class="t s" style="left:146px;width:169px;top:429.1px;font-size:17.8px;font-weight:normal;text-align:center;color:#000;word-spacing:0.4px;">GPMB</div>
<div class="t s" style="left:319px;width:371px;top:429.1px;font-size:17.8px;font-weight:normal;text-align:left;color:#000;word-spacing:0.4px;">Boi-thuong-cho-3-ho-cung-1-khu-vuc</div>
<div class="t s" style="left:694px;width:120px;top:429.1px;font-size:17.8px;font-weight:normal;text-align:center;color:#000;word-spacing:0.4px;">doc</div>
<div class="t s" style="left:818px;width:452px;top:429.1px;font-size:17.8px;font-weight:normal;text-align:left;color:#000;word-spacing:0.4px;">Hướng dẫn sử dụng phần mềm Giải phóng mặt bằng</div>
<div class="t" style="left:1274px;width:106px;top:429.5px;font-size:16px;text-align:center;"><span style="color:#1c1cb0;text-decoration:underline;text-underline-offset:2px">Mở file</span></div>
<div class="t s" style="left:82px;width:63px;top:465.1px;font-size:17.8px;font-weight:normal;text-align:center;color:#000;word-spacing:0.4px;">2</div>
<div class="t s" style="left:146px;width:169px;top:465.1px;font-size:17.8px;font-weight:normal;text-align:center;color:#000;word-spacing:0.4px;">GPMB</div>
<div class="t s" style="left:319px;width:371px;top:453.6px;font-size:17.8px;font-weight:normal;text-align:left;color:#000;word-spacing:0.4px;">chiet-tinh-don-gia-den-bu-doi-voi-nhung-cong-viec-</div>
<div class="t s" style="left:319px;width:371px;top:476.6px;font-size:17.8px;font-weight:normal;text-align:left;color:#000;word-spacing:0.4px;">khong-co-dong-gia-cong-b</div>
<div class="t s" style="left:694px;width:120px;top:465.1px;font-size:17.8px;font-weight:normal;text-align:center;color:#000;word-spacing:0.4px;">approj</div>
<div class="t s" style="left:818px;width:452px;top:453.6px;font-size:17.8px;font-weight:normal;text-align:left;color:#000;word-spacing:0.4px;">chiet tinh don gia den bu doi voi nhung cong viec khong co</div>
<div class="t s" style="left:818px;width:452px;top:476.6px;font-size:17.8px;font-weight:normal;text-align:left;color:#000;word-spacing:0.4px;">dong gia cong b</div>
<div class="t" style="left:1274px;width:106px;top:465.5px;font-size:16px;text-align:center;"><span style="color:#1c1cb0;text-decoration:underline;text-underline-offset:2px">Mở file</span></div>
<div class="t s" style="left:82px;width:63px;top:513.1px;font-size:17.8px;font-weight:normal;text-align:center;color:#000;word-spacing:0.4px;">3</div>
<div class="t s" style="left:146px;width:169px;top:513.1px;font-size:17.8px;font-weight:normal;text-align:center;color:#000;word-spacing:0.4px;">GPMB</div>
<div class="t s" style="left:319px;width:371px;top:501.6px;font-size:17.8px;font-weight:normal;text-align:left;color:#000;word-spacing:0.4px;">chon-co-so-du-lieu-xac-dinh-dia-phuong-chuan-bi-</div>
<div class="t s" style="left:319px;width:371px;top:524.6px;font-size:17.8px;font-weight:normal;text-align:left;color:#000;word-spacing:0.4px;">lam-quen-GPMB-GXD</div>
<div class="t s" style="left:694px;width:120px;top:513.1px;font-size:17.8px;font-weight:normal;text-align:center;color:#000;word-spacing:0.4px;">approj</div>
<div class="t s" style="left:818px;width:452px;top:501.6px;font-size:17.8px;font-weight:normal;text-align:left;color:#000;word-spacing:0.4px;">chon co so du lieu xac dinh dia phuong chuan bi lam quen</div>
<div class="t s" style="left:818px;width:452px;top:524.6px;font-size:17.8px;font-weight:normal;text-align:left;color:#000;word-spacing:0.4px;">GPMB GXD</div>
<div class="t" style="left:1274px;width:106px;top:513.5px;font-size:16px;text-align:center;"><span style="color:#1c1cb0;text-decoration:underline;text-underline-offset:2px">Mở file</span></div>
<div class="t s" style="left:82px;width:63px;top:549.1px;font-size:17.8px;font-weight:normal;text-align:center;color:#000;word-spacing:0.4px;">4</div>
<div class="t s" style="left:146px;width:169px;top:549.1px;font-size:17.8px;font-weight:normal;text-align:center;color:#000;word-spacing:0.4px;">GPMB</div>
<div class="t s" style="left:319px;width:371px;top:549.1px;font-size:17.8px;font-weight:normal;text-align:left;color:#000;word-spacing:0.4px;">danh-sach-gui-phan-mem-du-toan-GPMB</div>
<div class="t s" style="left:694px;width:120px;top:549.1px;font-size:17.8px;font-weight:normal;text-align:center;color:#000;word-spacing:0.4px;">xlsx</div>
<div class="t s" style="left:818px;width:452px;top:549.1px;font-size:17.8px;font-weight:normal;text-align:left;color:#000;word-spacing:0.4px;">danh sach gui phan mem du toan GPMB</div>
<div class="t" style="left:1274px;width:106px;top:549.5px;font-size:16px;text-align:center;"><span style="color:#1c1cb0;text-decoration:underline;text-underline-offset:2px">Mở file</span></div>
<div class="t s" style="left:82px;width:63px;top:573.1px;font-size:17.8px;font-weight:normal;text-align:center;color:#000;word-spacing:0.4px;">5</div>
<div class="t s" style="left:146px;width:169px;top:573.1px;font-size:17.8px;font-weight:normal;text-align:center;color:#000;word-spacing:0.4px;">GPMB</div>
<div class="t s" style="left:319px;width:371px;top:573.1px;font-size:17.8px;font-weight:normal;text-align:left;color:#000;word-spacing:0.4px;">Giai phong mat bang all</div>
<div class="t s" style="left:694px;width:120px;top:573.1px;font-size:17.8px;font-weight:normal;text-align:center;color:#000;word-spacing:0.4px;">rar</div>
<div class="t s" style="left:818px;width:452px;top:573.1px;font-size:17.8px;font-weight:normal;text-align:left;color:#000;word-spacing:0.4px;">Giai phong mat bang all</div>
<div class="t" style="left:1274px;width:106px;top:573.5px;font-size:16px;text-align:center;"><span style="color:#1c1cb0;text-decoration:underline;text-underline-offset:2px">Mở file</span></div>
<div class="t s" style="left:82px;width:63px;top:609.1px;font-size:17.8px;font-weight:normal;text-align:center;color:#000;word-spacing:0.4px;">6</div>
<div class="t s" style="left:146px;width:169px;top:609.1px;font-size:17.8px;font-weight:normal;text-align:center;color:#000;word-spacing:0.4px;">GPMB</div>
<div class="t s" style="left:319px;width:371px;top:597.6px;font-size:17.8px;font-weight:normal;text-align:left;color:#000;word-spacing:0.4px;">gioi-thieu-phan-mem-GPMB-GXD-kenh-video-cac-</div>
<div class="t s" style="left:319px;width:371px;top:620.6px;font-size:17.8px;font-weight:normal;text-align:left;color:#000;word-spacing:0.4px;">trang-thong-tin-cap-nhat-phan-mem</div>
<div class="t s" style="left:694px;width:120px;top:609.1px;font-size:17.8px;font-weight:normal;text-align:center;color:#000;word-spacing:0.4px;">approj</div>
<div class="t s" style="left:818px;width:452px;top:597.6px;font-size:17.8px;font-weight:normal;text-align:left;color:#000;word-spacing:0.4px;">gioi thieu phan mem GPMB GXD kenh video cac trang thong</div>
<div class="t s" style="left:818px;width:452px;top:620.6px;font-size:17.8px;font-weight:normal;text-align:left;color:#000;word-spacing:0.4px;">tin cap nhat phan mem</div>
<div class="t" style="left:1274px;width:106px;top:609.5px;font-size:16px;text-align:center;"><span style="color:#1c1cb0;text-decoration:underline;text-underline-offset:2px">Mở file</span></div>
<div class="t s" style="left:82px;width:63px;top:645.1px;font-size:17.8px;font-weight:normal;text-align:center;color:#000;word-spacing:0.4px;">7</div>
<div class="t s" style="left:146px;width:169px;top:645.1px;font-size:17.8px;font-weight:normal;text-align:center;color:#000;word-spacing:0.4px;">GPMB</div>
<div class="t s" style="left:319px;width:371px;top:645.1px;font-size:17.8px;font-weight:normal;text-align:left;color:#000;word-spacing:0.4px;">GPMBGXD1</div>
<div class="t s" style="left:694px;width:120px;top:645.1px;font-size:17.8px;font-weight:normal;text-align:center;color:#000;word-spacing:0.4px;">xlsm</div>
<div class="t s" style="left:818px;width:452px;top:645.1px;font-size:17.8px;font-weight:normal;text-align:left;color:#000;word-spacing:0.4px;">GPMBGXD1</div>
<div class="t" style="left:1274px;width:106px;top:645.5px;font-size:16px;text-align:center;"><span style="color:#1c1cb0;text-decoration:underline;text-underline-offset:2px">Mở file</span></div>
<div class="t s" style="left:82px;width:63px;top:669.1px;font-size:17.8px;font-weight:normal;text-align:center;color:#000;word-spacing:0.4px;">8</div>
<div class="t s" style="left:146px;width:169px;top:669.1px;font-size:17.8px;font-weight:normal;text-align:center;color:#000;word-spacing:0.4px;">GPMB</div>
<div class="t s" style="left:319px;width:371px;top:669.1px;font-size:17.8px;font-weight:normal;text-align:left;color:#000;word-spacing:0.4px;">GPMBGXD1</div>
<div class="t s" style="left:694px;width:120px;top:669.1px;font-size:17.8px;font-weight:normal;text-align:center;color:#000;word-spacing:0.4px;">xlsx</div>
<div class="t s" style="left:818px;width:452px;top:669.1px;font-size:17.8px;font-weight:normal;text-align:left;color:#000;word-spacing:0.4px;">GPMBGXD1</div>
<div class="t" style="left:1274px;width:106px;top:669.5px;font-size:16px;text-align:center;"><span style="color:#1c1cb0;text-decoration:underline;text-underline-offset:2px">Mở file</span></div>
<div class="t s" style="left:82px;width:63px;top:693.1px;font-size:17.8px;font-weight:normal;text-align:center;color:#000;word-spacing:0.4px;">9</div>
<div class="t s" style="left:146px;width:169px;top:693.1px;font-size:17.8px;font-weight:normal;text-align:center;color:#000;word-spacing:0.4px;">GPMB</div>
<div class="t s" style="left:319px;width:371px;top:693.1px;font-size:17.8px;font-weight:normal;text-align:left;color:#000;word-spacing:0.4px;">GXDsoftGPMB</div>
<div class="t s" style="left:694px;width:120px;top:693.1px;font-size:17.8px;font-weight:normal;text-align:center;color:#000;word-spacing:0.4px;">exe</div>
<div class="t s" style="left:818px;width:452px;top:693.1px;font-size:17.8px;font-weight:normal;text-align:left;color:#000;word-spacing:0.4px;">GXDsoftGPMB</div>
<div class="t" style="left:1274px;width:106px;top:693.5px;font-size:16px;text-align:center;"><span style="color:#1c1cb0;text-decoration:underline;text-underline-offset:2px">Mở file</span></div>
<div class="t s" style="left:82px;width:63px;top:717.1px;font-size:17.8px;font-weight:normal;text-align:center;color:#000;word-spacing:0.4px;">10</div>
<div class="t s" style="left:146px;width:169px;top:717.1px;font-size:17.8px;font-weight:normal;text-align:center;color:#000;word-spacing:0.4px;">GPMB</div>
<div class="t s" style="left:319px;width:371px;top:717.1px;font-size:17.8px;font-weight:normal;text-align:left;color:#000;word-spacing:0.4px;">GXDsoftGPMB</div>
<div class="t s" style="left:694px;width:120px;top:717.1px;font-size:17.8px;font-weight:normal;text-align:center;color:#000;word-spacing:0.4px;">rar</div>
<div class="t s" style="left:818px;width:452px;top:717.1px;font-size:17.8px;font-weight:normal;text-align:left;color:#000;word-spacing:0.4px;">GXDsoftGPMB</div>
<div class="t" style="left:1274px;width:106px;top:717.5px;font-size:16px;text-align:center;"><span style="color:#1c1cb0;text-decoration:underline;text-underline-offset:2px">Mở file</span></div>
<div class="t s" style="left:82px;width:63px;top:741.1px;font-size:17.8px;font-weight:normal;text-align:center;color:#000;word-spacing:0.4px;">11</div>
<div class="t s" style="left:146px;width:169px;top:741.1px;font-size:17.8px;font-weight:normal;text-align:center;color:#000;word-spacing:0.4px;">GPMB</div>
<div class="t s" style="left:319px;width:371px;top:741.1px;font-size:17.8px;font-weight:normal;text-align:left;color:#000;word-spacing:0.4px;">HaNoi</div>
<div class="t s" style="left:694px;width:120px;top:741.1px;font-size:17.8px;font-weight:normal;text-align:center;color:#000;word-spacing:0.4px;">rar</div>
<div class="t s" style="left:818px;width:452px;top:741.1px;font-size:17.8px;font-weight:normal;text-align:left;color:#000;word-spacing:0.4px;">HaNoi</div>
<div class="t" style="left:1274px;width:106px;top:741.5px;font-size:16px;text-align:center;"><span style="color:#1c1cb0;text-decoration:underline;text-underline-offset:2px">Mở file</span></div>
<div class="t s" style="left:82px;width:63px;top:765.1px;font-size:17.8px;font-weight:normal;text-align:center;color:#000;word-spacing:0.4px;">12</div>
<div class="t s" style="left:146px;width:169px;top:765.1px;font-size:17.8px;font-weight:normal;text-align:center;color:#000;word-spacing:0.4px;">GPMB</div>
<div class="t s" style="left:319px;width:371px;top:765.1px;font-size:17.8px;font-weight:normal;text-align:left;color:#000;word-spacing:0.4px;">huong-dan-cai-phan-mem-GPMB-GXD</div>
<div class="t s" style="left:694px;width:120px;top:765.1px;font-size:17.8px;font-weight:normal;text-align:center;color:#000;word-spacing:0.4px;">approj</div>
<div class="t s" style="left:818px;width:452px;top:765.1px;font-size:17.8px;font-weight:normal;text-align:left;color:#000;word-spacing:0.4px;">huong dan cai phan mem GPMB GXD</div>
<div class="t" style="left:1274px;width:106px;top:765.5px;font-size:16px;text-align:center;"><span style="color:#1c1cb0;text-decoration:underline;text-underline-offset:2px">Mở file</span></div>
<div class="t s" style="left:82px;width:63px;top:801.1px;font-size:17.8px;font-weight:normal;text-align:center;color:#000;word-spacing:0.4px;">13</div>
<div class="t s" style="left:146px;width:169px;top:801.1px;font-size:17.8px;font-weight:normal;text-align:center;color:#000;word-spacing:0.4px;">GPMB</div>
<div class="t s" style="left:319px;width:371px;top:801.1px;font-size:17.8px;font-weight:normal;text-align:left;color:#000;word-spacing:0.4px;">HuongDanNhapCSDL-GPMB</div>
<div class="t s" style="left:694px;width:120px;top:801.1px;font-size:17.8px;font-weight:normal;text-align:center;color:#000;word-spacing:0.4px;">doc</div>
<div class="t s" style="left:818px;width:452px;top:789.6px;font-size:17.8px;font-weight:normal;text-align:left;color:#000;word-spacing:0.4px;">HƯỚNG DẪN SỬ DỤNG       PHẦN MỀM LẬP PHƯƠNG</div>
<div class="t s" style="left:818px;width:452px;top:812.6px;font-size:17.8px;font-weight:normal;text-align:left;color:#000;word-spacing:0.4px;">ÁN GIẢI PHÓNG MẶT BẰNG GXD</div>
<div class="t" style="left:1274px;width:106px;top:801.5px;font-size:16px;text-align:center;"><span style="color:#1c1cb0;text-decoration:underline;text-underline-offset:2px">Mở file</span></div>
<div class="t s" style="left:82px;width:63px;top:837.1px;font-size:17.8px;font-weight:normal;text-align:center;color:#000;word-spacing:0.4px;">14</div>
<div class="t s" style="left:146px;width:169px;top:837.1px;font-size:17.8px;font-weight:normal;text-align:center;color:#000;word-spacing:0.4px;">GPMB</div>
<div class="t s" style="left:319px;width:371px;top:837.1px;font-size:17.8px;font-weight:normal;text-align:left;color:#000;word-spacing:0.4px;">IMG_20180710_084927</div>
<div class="t s" style="left:694px;width:120px;top:837.1px;font-size:17.8px;font-weight:normal;text-align:center;color:#000;word-spacing:0.4px;">jpg</div>
<div class="t s" style="left:818px;width:452px;top:837.1px;font-size:17.8px;font-weight:normal;text-align:left;color:#000;word-spacing:0.4px;">IMG 20180710 084927</div>
<div class="t" style="left:1274px;width:106px;top:837.5px;font-size:16px;text-align:center;"><span style="color:#1c1cb0;text-decoration:underline;text-underline-offset:2px">Mở file</span></div>
<div class="t s" style="left:82px;width:63px;top:861.1px;font-size:17.8px;font-weight:normal;text-align:center;color:#000;word-spacing:0.4px;">15</div>
<div class="t s" style="left:146px;width:169px;top:861.1px;font-size:17.8px;font-weight:normal;text-align:center;color:#000;word-spacing:0.4px;">GPMB</div>
<div class="t s" style="left:319px;width:371px;top:861.1px;font-size:17.8px;font-weight:normal;text-align:left;color:#000;word-spacing:0.4px;">IMG_20180710_085022</div>
<div class="t s" style="left:694px;width:120px;top:861.1px;font-size:17.8px;font-weight:normal;text-align:center;color:#000;word-spacing:0.4px;">jpg</div>
<div class="t s" style="left:818px;width:452px;top:861.1px;font-size:17.8px;font-weight:normal;text-align:left;color:#000;word-spacing:0.4px;">IMG 20180710 085022</div>
<div class="t" style="left:1274px;width:106px;top:861.5px;font-size:16px;text-align:center;"><span style="color:#1c1cb0;text-decoration:underline;text-underline-offset:2px">Mở file</span></div>
<div class="t s" style="left:82px;width:63px;top:885.1px;font-size:17.8px;font-weight:normal;text-align:center;color:#000;word-spacing:0.4px;">16</div>
<div class="t s" style="left:146px;width:169px;top:885.1px;font-size:17.8px;font-weight:normal;text-align:center;color:#000;word-spacing:0.4px;">GPMB</div>
<div class="t s" style="left:319px;width:371px;top:885.1px;font-size:17.8px;font-weight:normal;text-align:left;color:#000;word-spacing:0.4px;">IMG_20180710_085033</div>
<div class="t s" style="left:694px;width:120px;top:885.1px;font-size:17.8px;font-weight:normal;text-align:center;color:#000;word-spacing:0.4px;">jpg</div>
<div class="t s" style="left:818px;width:452px;top:885.1px;font-size:17.8px;font-weight:normal;text-align:left;color:#000;word-spacing:0.4px;">IMG 20180710 085033</div>
<div class="t" style="left:1274px;width:106px;top:885.5px;font-size:16px;text-align:center;"><span style="color:#1c1cb0;text-decoration:underline;text-underline-offset:2px">Mở file</span></div>
<div class="t s" style="left:82px;width:63px;top:909.1px;font-size:17.8px;font-weight:normal;text-align:center;color:#000;word-spacing:0.4px;">17</div>
<div class="t s" style="left:146px;width:169px;top:909.1px;font-size:17.8px;font-weight:normal;text-align:center;color:#000;word-spacing:0.4px;">GPMB</div>
<div class="t s" style="left:319px;width:371px;top:909.1px;font-size:17.8px;font-weight:normal;text-align:left;color:#000;word-spacing:0.4px;">IMG_20180710_085313</div>
<div class="t s" style="left:694px;width:120px;top:909.1px;font-size:17.8px;font-weight:normal;text-align:center;color:#000;word-spacing:0.4px;">jpg</div>
<div class="t s" style="left:818px;width:452px;top:909.1px;font-size:17.8px;font-weight:normal;text-align:left;color:#000;word-spacing:0.4px;">IMG 20180710 085313</div>
<div class="t" style="left:1274px;width:106px;top:909.5px;font-size:16px;text-align:center;"><span style="color:#1c1cb0;text-decoration:underline;text-underline-offset:2px">Mở file</span></div>
<div class="t s" style="left:82px;width:63px;top:933.1px;font-size:17.8px;font-weight:normal;text-align:center;color:#000;word-spacing:0.4px;">18</div>
<div class="t s" style="left:146px;width:169px;top:933.1px;font-size:17.8px;font-weight:normal;text-align:center;color:#000;word-spacing:0.4px;">GPMB</div>
<div class="t s" style="left:319px;width:371px;top:933.1px;font-size:17.8px;font-weight:normal;text-align:left;color:#000;word-spacing:0.4px;">khoang-cach-an-toan-ve-moi-truong</div>
<div class="t s" style="left:694px;width:120px;top:933.1px;font-size:17.8px;font-weight:normal;text-align:center;color:#000;word-spacing:0.4px;">jpg</div>
<div class="t s" style="left:818px;width:452px;top:933.1px;font-size:17.8px;font-weight:normal;text-align:left;color:#000;word-spacing:0.4px;">khoang cach an toan ve moi truong</div>
<div class="t" style="left:1274px;width:106px;top:933.5px;font-size:16px;text-align:center;"><span style="color:#1c1cb0;text-decoration:underline;text-underline-offset:2px">Mở file</span></div>
</div>
<div style="left:2px;top:402px;width:21px;height:21px;border:1px solid #a0a0a0;background:#ececec"></div>
<div style="left:7px;top:412px;width:11px;height:2px;background:#444"></div>
<div style="left:9px;top:422px;width:2px;height:516px;background:#9a9a9a"></div>
<div style="left:30px;top:436px;width:2px;height:2px;background:#888"></div>
<div style="left:30px;top:472px;width:2px;height:2px;background:#888"></div>
<div style="left:30px;top:520px;width:2px;height:2px;background:#888"></div>
<div style="left:30px;top:556px;width:2px;height:2px;background:#888"></div>
<div style="left:30px;top:580px;width:2px;height:2px;background:#888"></div>
<div style="left:30px;top:616px;width:2px;height:2px;background:#888"></div>
<div style="left:30px;top:652px;width:2px;height:2px;background:#888"></div>
<div style="left:30px;top:676px;width:2px;height:2px;background:#888"></div>
<div style="left:30px;top:700px;width:2px;height:2px;background:#888"></div>
<div style="left:30px;top:724px;width:2px;height:2px;background:#888"></div>
<div style="left:30px;top:748px;width:2px;height:2px;background:#888"></div>
<div style="left:30px;top:772px;width:2px;height:2px;background:#888"></div>
<div style="left:30px;top:808px;width:2px;height:2px;background:#888"></div>
<div style="left:30px;top:844px;width:2px;height:2px;background:#888"></div>
<div style="left:30px;top:868px;width:2px;height:2px;background:#888"></div>
<div style="left:30px;top:892px;width:2px;height:2px;background:#888"></div>
<div style="left:30px;top:916px;width:2px;height:2px;background:#888"></div>
<div style="left:0px;top:938px;width:1609px;height:29px;background:#f0f0f0;border-top:1px solid #c6c6c6"></div>
<svg style="left:26px;top:946px;" width="8" height="13" viewBox="0 0 8 13"><path d="M7 1L1 6.5 7 12z" fill="#b9b9b9"/></svg>
<svg style="left:55px;top:946px;" width="8" height="13" viewBox="0 0 8 13"><path d="M1 1l6 5.5L1 12z" fill="#b9b9b9"/></svg>
<div style="left:103px;top:942px;width:1px;height:21px;background:#c6c6c6"></div>
<div style="left:106px;top:941px;width:83px;height:22px;background:#1ba6e5"></div>
<div class="t" style="left:106px;top:941px;width:83px;text-align:center;font-size:17px;font-weight:normal;color:#1b2f4a">Van ban</div>
<div style="left:192px;top:939px;width:86px;height:26px;background:linear-gradient(#fff 0%,#fde4e4 40%,#f59a9a 100%);border-left:1px solid #aaa;border-right:1px solid #aaa;border-bottom:2px solid #2e6b47"></div>
<div class="t" style="left:192px;top:941px;width:86px;text-align:center;font-size:17px;font-weight:bold;color:#2e6b47">Quan ly</div>
<div style="left:280px;top:941px;width:95px;height:22px;background:#10a84b"></div>
<div class="t" style="left:280px;top:941px;width:95px;text-align:center;font-size:17px;font-weight:normal;color:#10301c">Quy trinh</div>
<div style="left:380px;top:941px;width:93px;height:22px;background:#92d050"></div>
<div class="t" style="left:380px;top:941px;width:93px;text-align:center;font-size:17px;font-weight:normal;color:#1f3312">Bieu mau</div>
<div style="left:479px;top:941px;width:99px;height:22px;background:#92d050"></div>
<div class="t" style="left:479px;top:941px;width:99px;text-align:center;font-size:17px;font-weight:normal;color:#1f3312">Giao trinh</div>
<div style="left:583px;top:941px;width:105px;height:22px;background:#f79646"></div>
<div class="t" style="left:583px;top:941px;width:105px;text-align:center;font-size:17px;font-weight:normal;color:#3b230e">Tieu chuan</div>
<div style="left:693px;top:941px;width:85px;height:22px;background:#4dc5f4"></div>
<div class="t" style="left:693px;top:941px;width:85px;text-align:center;font-size:17px;font-weight:normal;color:#17324a">Link hay</div>
<div style="left:781px;top:942px;width:1px;height:21px;background:#c6c6c6"></div>
<svg style="left:813px;top:943px;" width="20" height="20" viewBox="0 0 20 20"><circle cx="10" cy="10" r="8.5" fill="none" stroke="#777" stroke-width="1.4"/><path d="M10 5v10M5 10h10" stroke="#777" stroke-width="1.5"/></svg>
<svg style="left:1216px;top:944px;" width="6" height="16" viewBox="0 0 6 16"><circle cx="3" cy="2.5" r="1.3" fill="#999"/><circle cx="3" cy="8" r="1.3" fill="#999"/><circle cx="3" cy="13.5" r="1.3" fill="#999"/></svg>
<div style="left:1236px;top:943px;width:380px;height:20px;border:1px solid #c6c6c6;background:#fff"></div>
<div style="left:1255px;top:943px;width:1px;height:20px;background:#c6c6c6"></div>
<svg style="left:1241px;top:947px;" width="9" height="12" viewBox="0 0 9 12"><path d="M7 1L1 6 7 11z" fill="#666"/></svg>
<div style="left:186px;top:935px;width:96px;height:32px;border:3px solid #e0131a;border-radius:6px"></div>
<div style="left:0px;top:967px;width:1609px;height:5px;background:#217346"></div>
<svg style="left:860px;top:170px;" width="700" height="130" viewBox="0 0 700 130"><text x="17" y="32.5" font-size="26" font-family="Liberation Sans" font-weight="bold" fill="#ffe800" stroke="#e81010" stroke-width="5.5" stroke-linejoin="round" paint-order="stroke" textLength="265" lengthAdjust="spacingAndGlyphs">- Gõ từ khóa tìm kiếm</text><text x="18" y="67" font-size="26" font-family="Liberation Sans" font-weight="bold" fill="#ffe800" stroke="#e81010" stroke-width="5.5" stroke-linejoin="round" paint-order="stroke" textLength="434" lengthAdjust="spacingAndGlyphs">- Hoặc dùng lệnh Ctrl + F của Excel</text><text x="18" y="114" font-size="26" font-family="Liberation Sans" font-weight="bold" fill="#ffe800" stroke="#e81010" stroke-width="5.5" stroke-linejoin="round" paint-order="stroke" textLength="653" lengthAdjust="spacingAndGlyphs">- Hoặc để cố định ở 1 vị trí trong bảng tính, tìm là thấy</text></svg>
<svg style="left:1400px;top:630px;" width="130" height="80" viewBox="0 0 130 80"><text x="18.5" y="33.5" font-size="26" font-family="Liberation Sans" font-weight="bold" fill="#ffe800" stroke="#e81010" stroke-width="5.5" stroke-linejoin="round" paint-order="stroke" textLength="88" lengthAdjust="spacingAndGlyphs">Kích để</text><text x="21" y="66" font-size="26" font-family="Liberation Sans" font-weight="bold" fill="#ffe800" stroke="#e81010" stroke-width="5.5" stroke-linejoin="round" paint-order="stroke" textLength="82" lengthAdjust="spacingAndGlyphs">mở file</text></svg>
<svg style="left:0px;top:0px;pointer-events:none" width="1609" height="972" viewBox="0 0 1609 972"><path d="M1014 180L943.4 144.7" stroke="#e81010" stroke-width="3.5"/><path d="M930 138L949.2 139.8L943.0 152.3z" fill="#e81010"/></svg>
<svg style="left:0px;top:0px;pointer-events:none" width="1609" height="972" viewBox="0 0 1609 972"><path d="M1419 625L1376.9 599.7" stroke="#e81010" stroke-width="3.5"/><path d="M1364 592L1383.0 595.3L1375.8 607.3z" fill="#e81010"/></svg>
</body></html>
